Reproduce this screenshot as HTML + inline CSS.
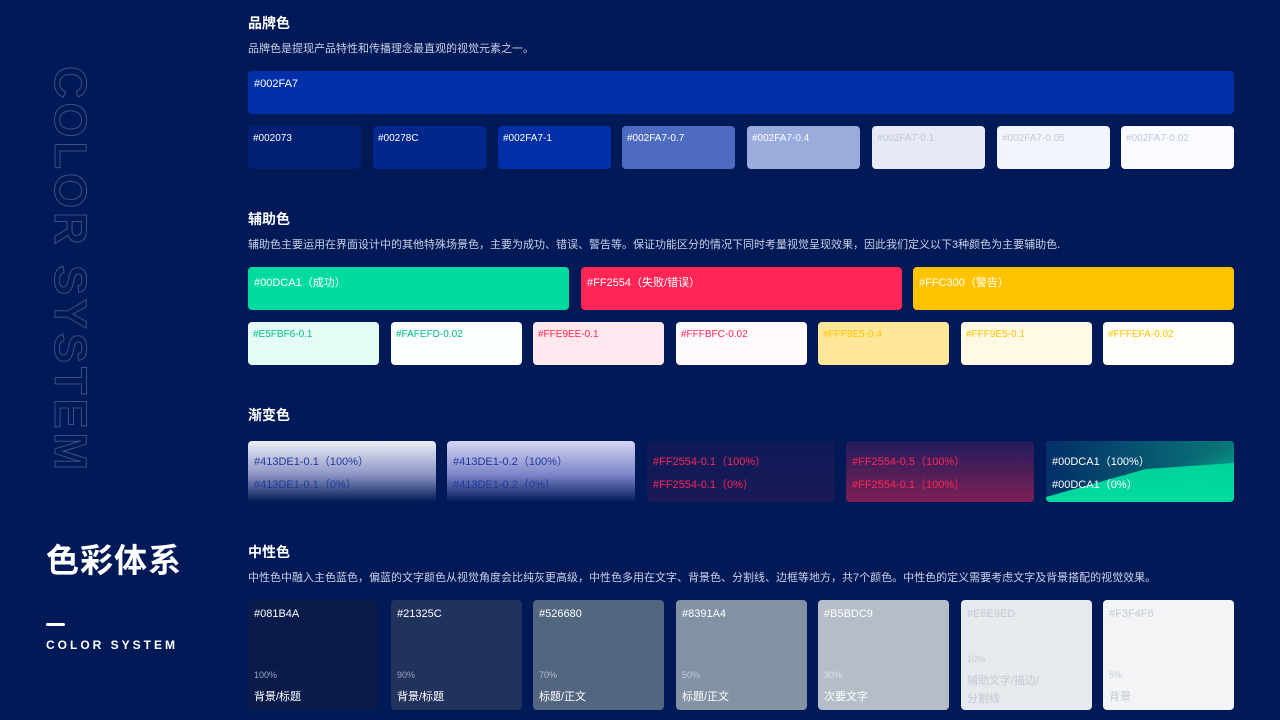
<!DOCTYPE html>
<html><head><meta charset="utf-8"><style>
*{margin:0;padding:0;box-sizing:border-box}
body{width:1280px;height:720px;overflow:hidden;background:#011a57;font-family:"Liberation Sans","Noto Sans CJK SC",sans-serif;position:relative;color:#fff}
.a{position:absolute}
.h{font-size:14px;font-weight:bold;color:#fff}
.d{font-size:11px;color:#c9d0e6}
.sw{position:absolute;border-radius:4px;font-size:10px;padding:7px 5px}
.big{position:absolute;border-radius:4px;font-size:11px;padding:7px 6px}
.g{position:absolute;top:441px;width:188px;height:61px;border-radius:4px;font-size:11px;overflow:hidden}
.g span{position:absolute;left:6px}
.n{position:absolute;top:600px;width:131px;height:110px;border-radius:4px;font-size:11px}
.n .t{position:absolute;left:6px;top:8px}
.n .p{position:absolute;left:6px;top:70px;font-size:9px}
.n .l{position:absolute;left:6px;top:88px}
</style></head><body>
<div class="a" style="left:48px;top:66px;width:44px;height:400px;">
<div style="position:absolute;left:44px;top:0;transform-origin:0 0;transform:rotate(90deg);font-size:45px;font-weight:900;letter-spacing:4px;white-space:nowrap;color:transparent;-webkit-text-stroke:1px #3d4f85;line-height:44px">COLOR SYSTEM</div></div>
<div class="a" style="left:46px;top:534px;font-size:33px;font-weight:bold;letter-spacing:1px">色彩体系</div>
<div class="a" style="left:46px;top:623px;width:19px;height:3px;background:#fff;border-radius:2px"></div>
<div class="a" style="left:46px;top:638px;font-size:12px;font-weight:bold;letter-spacing:3px">COLOR SYSTEM</div>

<div class="a h" style="left:248px;top:13px">品牌色</div>
<div class="a d" style="left:248px;top:40px">品牌色是提现产品特性和传播理念最直观的视觉元素之一。</div>
<div class="big" style="left:248px;top:71px;width:986px;height:43px;background:#002fa7">#002FA7</div>
<div class="sw" style="left:248px;top:126px;width:113px;height:43px;background:#002073">#002073</div>
<div class="sw" style="left:373px;top:126px;width:113px;height:43px;background:#00278c">#00278C</div>
<div class="sw" style="left:498px;top:126px;width:113px;height:43px;background:#002fa7">#002FA7-1</div>
<div class="sw" style="left:622px;top:126px;width:113px;height:43px;background:#4d6cc1">#002FA7-0.7</div>
<div class="sw" style="left:747px;top:126px;width:113px;height:43px;background:#99acdc">#002FA7-0.4</div>
<div class="sw" style="left:872px;top:126px;width:113px;height:43px;background:#e6eaf6;color:#c0c8dd">#002FA7-0.1</div>
<div class="sw" style="left:997px;top:126px;width:113px;height:43px;background:#f2f5fb;color:#c0c8dd">#002FA7-0.05</div>
<div class="sw" style="left:1121px;top:126px;width:113px;height:43px;background:#fafbfe;color:#c0c8dd">#002FA7-0.02</div>

<div class="a h" style="left:248px;top:209px">辅助色</div>
<div class="a d" style="left:248px;top:236px">辅助色主要运用在界面设计中的其他特殊场景色，主要为成功、错误、警告等。保证功能区分的情况下同时考量视觉呈现效果，因此我们定义以下3种颜色为主要辅助色.</div>
<div class="big" style="left:248px;top:267px;width:321px;height:43px;background:#00dca1">#00DCA1（成功）</div>
<div class="big" style="left:581px;top:267px;width:321px;height:43px;background:#ff2554">#FF2554（失败/错误）</div>
<div class="big" style="left:913px;top:267px;width:321px;height:43px;background:#ffc300">#FFC300（警告）</div>
<div class="sw" style="left:248px;top:322px;width:131px;height:43px;background:#e5fbf6;color:#00c08c">#E5FBF6-0.1</div>
<div class="sw" style="left:391px;top:322px;width:131px;height:43px;background:#fafefd;color:#00c08c">#FAFEFD-0.02</div>
<div class="sw" style="left:533px;top:322px;width:131px;height:43px;background:#ffe9ee;color:#ff2554">#FFE9EE-0.1</div>
<div class="sw" style="left:676px;top:322px;width:131px;height:43px;background:#fffbfc;color:#ff2554">#FFFBFC-0.02</div>
<div class="sw" style="left:818px;top:322px;width:131px;height:43px;background:#ffe799;color:#ffc300">#FFF9E5-0.4</div>
<div class="sw" style="left:961px;top:322px;width:131px;height:43px;background:#fff9e5;color:#ffc300">#FFF9E5-0.1</div>
<div class="sw" style="left:1103px;top:322px;width:131px;height:43px;background:#fffefa;color:#ffc300">#FFFEFA-0.02</div>

<div class="a h" style="left:248px;top:405px">渐变色</div>
<div class="g" style="left:248px;background:linear-gradient(#eceef8,#8d95c4 55%,#011a57);color:#1f3aa0"><span style="top:12px">#413DE1-0.1（100%）</span><span style="top:35px">#413DE1-0.1（0%）</span></div>
<div class="g" style="left:447px;background:linear-gradient(#d4d6f5,#7d85c8 55%,#011a57);color:#1f3aa0"><span style="top:12px">#413DE1-0.2（100%）</span><span style="top:35px">#413DE1-0.2（0%）</span></div>
<div class="g" style="left:647px;background:linear-gradient(#0e1a57,#1a1a57);color:#ff2554"><span style="top:12px">#FF2554-0.1（100%）</span><span style="top:35px">#FF2554-0.1（0%）</span></div>
<div class="g" style="left:846px;background:linear-gradient(#221c5c,#7c2056);color:#ff2554"><span style="top:12px">#FF2554-0.5（100%）</span><span style="top:35px">#FF2554-0.1（100%）</span></div>
<div class="g" style="left:1046px;background:linear-gradient(#00c896,#00dca1);color:#fff">
<div style="position:absolute;left:0;top:0;width:188px;height:61px;background:linear-gradient(90deg,#022f68,#0a7878);clip-path:polygon(0 0,100% 0,100% 61px,188px 61px,188px 22px,100px 28px,0 56px)"></div>
<div style="position:absolute;left:0;top:0;width:188px;height:61px;background:linear-gradient(160deg,transparent 55%,rgba(0,220,161,0.35) 75%,transparent 90%)"></div>
<span style="top:12px">#00DCA1（100%）</span><span style="top:35px">#00DCA1（0%）</span></div>

<div class="a h" style="left:248px;top:542px">中性色</div>
<div class="a d" style="left:248px;top:569px">中性色中融入主色蓝色，偏蓝的文字颜色从视觉角度会比纯灰更高级，中性色多用在文字、背景色、分割线、边框等地方，共7个颜色。中性色的定义需要考虑文字及背景搭配的视觉效果。</div>
<div class="n" style="left:248px;background:#081b4a"><span class="t">#081B4A</span><span class="p" style="color:#9aa3bf">100%</span><span class="l">背景/标题</span></div>
<div class="n" style="left:391px;background:#21325c"><span class="t">#21325C</span><span class="p" style="color:#9aa3bf">90%</span><span class="l">背景/标题</span></div>
<div class="n" style="left:533px;background:#526680"><span class="t">#526680</span><span class="p" style="color:#b4bccd">70%</span><span class="l">标题/正文</span></div>
<div class="n" style="left:676px;background:#8391a4"><span class="t">#8391A4</span><span class="p" style="color:#c4cad6">50%</span><span class="l">标题/正文</span></div>
<div class="n" style="left:818px;background:#b5bdc9"><span class="t">#B5BDC9</span><span class="p" style="color:#e0e4ea">30%</span><span class="l">次要文字</span></div>
<div class="n" style="left:961px;background:#e6e9ed;color:#c4c9d2"><span class="t">#E6E9ED</span><span class="p" style="top:54px">10%</span><span class="l" style="top:72px;line-height:18px">辅助文字/描边/<br>分割线</span></div>
<div class="n" style="left:1103px;background:#f3f4f6;color:#c4c9d2"><span class="t">#F3F4F6</span><span class="p">5%</span><span class="l">背景</span></div>
</body></html>
